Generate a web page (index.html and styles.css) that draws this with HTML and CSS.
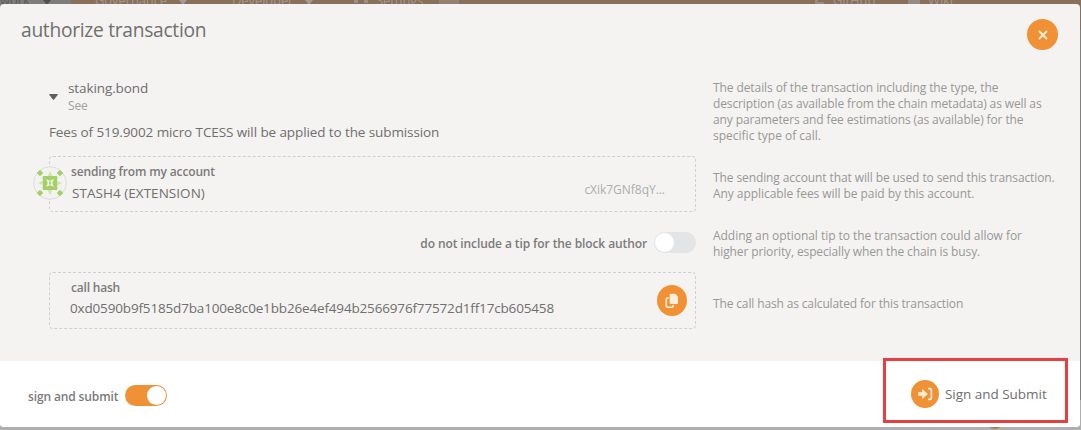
FILE: index.html
```html
<!DOCTYPE html>
<html lang="en">
<head>
<meta charset="utf-8">
<title>authorize transaction</title>
<link rel="stylesheet" href="styles.css">
</head>
<body>
<div class="backdrop">
  <nav class="menu">
    <span class="tab tab-current">work</span>
    <span class="tab tab-gov">Governance</span>
    <span class="tab tab-dev">Developer</span>
    <span class="tab tab-set">Settings</span>
    <span class="tab tab-git">GitHub</span>
    <span class="tab tab-wiki">Wiki</span>
    <i class="caret caret-a"></i><i class="caret caret-b"></i><i class="caret caret-c"></i>
    <i class="gear"></i><i class="badge"></i><i class="branch"></i><i class="book"></i>
  </nav>
  <i class="page-dot"></i>
</div>
<main class="modal">
  <header class="header">
    <h1 class="title">authorize transaction</h1>
    <button class="round close" aria-label="Close"><svg width="10" height="10" viewBox="0 0 10 10"><path d="M1 1l8 8M9 1l-8 8" fill="none" stroke="#fdeeda" stroke-width="1.8"/></svg></button>
  </header>
  <section class="content">
    <div class="row row-details">
      <div class="details">
        <div class="call">
          <svg class="arrow" width="9" height="6" viewBox="0 0 9 6"><path d="M.7 0h7.600q.9.4.3 1.100L5.100 5.400q-.6.6-1.200 0L.4 1.100Q-.2.4.7 0z" fill="#5f5f5e"/></svg>
          <div class="call-text"><div class="method">staking.bond</div><div class="see">See</div></div>
        </div>
        <p class="fees">Fees of 519.9002 micro TCESS will be applied to the submission</p>
      </div>
      <p class="help"><span class="l1">The details of the transaction including the type, the</span><br><span class="l2">description (as available from the chain metadata) as well as</span><br><span class="l3">any parameters and fee estimations (as available) for the</span><br><span class="l4">specific type of call.</span></p>
    </div>
    <div class="row row-account">
      <div class="box account">
        <svg class="identicon" width="34" height="34" viewBox="0 0 34 34"><circle cx="17" cy="17" r="16.3" fill="#f2f2f1" stroke="#dcdcdb"/><path d="M17 5l3.500 7H14zM29 17l-7 3.500V14zM17 29l-3.500-7H20zM5 17l7-3.500V20zM8.500 11.500l6-1-4 5zM25.500 11.500l-6-1 4 5zM8.500 22.500l6 1-4-5zM25.500 22.500l-6 1 4-5z" fill="#cfe5b0"/><path d="M10 10h14v14H10z" fill="#a5cf67"/><path d="M13 13l3 1.500h2L21 13l-1.500 3v2L21 21l-3-1.500h-2L13 21l1.500-3v-2z" fill="#f4f8ed"/><path d="M17 14.500l1.200 2.500-1.200 2.500-1.200-2.500z" fill="#a5cf67"/><path d="M7 4.200l2.800 2.800L7 9.800 4.200 7zM27 4.200l2.800 2.800L27 9.800 24.200 7zM7 24.200l2.800 2.800L7 29.800 4.200 27zM27 24.200l2.800 2.800-2.800 2.800-2.800-2.800z" fill="#a5cf67" stroke="#a5cf67" stroke-width=".8" stroke-linejoin="round"/></svg>
        <div class="field"><div class="label label-account">sending from my account</div><div class="value name">STASH4 (EXTENSION)</div></div>
        <span class="address">cXik7GNf8qY...</span>
      </div>
      <p class="help"><span class="l5">The sending account that will be used to send this transaction.</span><br><span class="l6">Any applicable fees will be paid by this account.</span></p>
    </div>
    <div class="row row-tip">
      <div class="tip"><span class="label label-tip">do not include a tip for the block author</span><span class="toggle"></span></div>
      <p class="help"><span class="l7">Adding an optional tip to the transaction could allow for</span><br><span class="l8">higher priority, especially when the chain is busy.</span></p>
    </div>
    <div class="row row-hash">
      <div class="box hash">
        <div class="field"><div class="label label-hash">call hash</div><div class="value digest">0xd0590b9f5185d7ba100e8c0e1bb26e4ef494b2566976f77572d1ff17cb605458</div></div>
        <button class="round copy" aria-label="Copy"><svg width="14" height="16" viewBox="0 0 14 16"><path d="M3.800 5H2.200q-.9 0-.9.9v7.400q0 .9.9.9h5q.9 0 .9-.9v-1.200" fill="none" stroke="#fdeedb" stroke-width="1.600"/><path d="M6 .8h4.200L13 3.600v6.200q0 1.300-1.300 1.300H6q-1.300 0-1.300-1.300V2.100Q4.700.8 6 .8z" fill="#fdeedb"/></svg></button>
      </div>
      <p class="help"><span class="l9">The call hash as calculated for this transaction</span></p>
    </div>
  </section>
  <footer class="footer">
    <div class="sign"><span class="label label-sign">sign and submit</span><span class="toggle toggle-on"></span></div>
    <div class="submit-frame"><button class="submit"><span class="round submit-icon"><svg width="15" height="14" viewBox="0 0 15 14"><path d="M.5 5.500h4V2.600L9.500 7l-5 4.400V8.500h-4z" fill="#fdeedb" stroke="#fdeedb" stroke-width=".6" stroke-linejoin="round"/><path d="M10 1.700h2.200q1.200 0 1.200 1.200v8.200q0 1.200-1.200 1.200H10" fill="none" stroke="#fdeedb" stroke-width="1.700"/></svg></span><span class="submit-text">Sign and Submit</span></button></div>
  </footer>
</main>
</body>
</html>
```
FILE: styles.css
```css
* { box-sizing: border-box; }
body { margin: 0; width: 1081px; height: 430px; overflow: hidden; position: relative; font: 13.5px/20px "Open Sans", "Noto Sans", sans-serif; letter-spacing: -.1px; color: #6f6f6e; background: #afafaf; }
h1, p { margin: 0; font-weight: 400; }
button { border: 0; padding: 0; background: none; font: inherit; letter-spacing: inherit; color: inherit; }
svg { display: block; flex: none; }
.backdrop { position: absolute; inset: 0; background: linear-gradient(#808080 0 400px, #afafaf 400px); }
.menu { position: absolute; top: 0; left: 0; right: 0; height: 30px; background: #88705a; overflow: hidden; }
.menu i, .tab { position: absolute; }
.tab { top: -8px; line-height: 16px; font-size: 13px; color: #a2968c; }
.tab-current { left: 0; width: 71px; height: 38px; background: #7d7d7d; color: #5b5b5b; }
.tab-gov { left: 95px; }
.tab-dev { left: 232px; }
.tab-set { left: 376px; }
.tab-git { left: 833px; }
.tab-wiki { left: 928px; }
.caret { top: 0; border: 4px solid transparent; border-top: 5px solid #a69a90; border-bottom: 0; }
.caret-a { left: 43px; border-top-color: #505050; }
.caret-b { left: 179px; }
.caret-c { left: 305px; }
.gear { left: 354px; top: 0; width: 14px; height: 3px; border: solid #9b8f84; border-width: 0 4px; }
.badge { left: 439px; top: 0; width: 20px; height: 4px; background: #94816f; }
.branch { left: 815px; top: 0; width: 9px; height: 4px; border: 2px solid #948b82; border-width: 0 0 2px 3px; }
.book { left: 908px; top: 0; width: 12px; height: 4px; background: #948b82; }
.page-dot { position: absolute; left: 985px; top: 409px; width: 20px; height: 20px; border-radius: 50%; background: #b07a48; }
.modal { position: relative; width: 1080px; height: 423px; margin-top: 4px; border-radius: 4px; overflow: hidden; background: #f4f3f1; display: flex; flex-direction: column; }
body::before { content: ""; display: table; }
.header { height: 62px; display: flex; justify-content: space-between; align-items: flex-start; padding: 14px 22px 0 21px; }
.title { font-size: 19.2px; line-height: 24px; letter-spacing: -.28px; }
.round { display: flex; align-items: center; justify-content: center; flex: none; width: 30px; height: 30px; border-radius: 50%; background: #f19135; }
.close { width: 31px; height: 31px; margin-top: 1px; }
.content { height: 295px; padding: 0 25px 0 49px; }
.row { display: grid; grid-template-columns: 647px 1fr; column-gap: 17px; }
.row-details { height: 90px; }
.call { display: flex; align-items: center; gap: 10px; padding-top: 13px; }
.call-text { height: 36px; }
.method { line-height: 19px; }
.see { font-size: 12px; line-height: 16px; color: #a1a1a0; }
.fees { margin-top: 7px; }
.help { font-size: 12px; line-height: 16px; color: #989896; white-space: nowrap; padding-top: 14px; }
.l1 { letter-spacing: -.09px; }
.l2, .l3, .l8 { letter-spacing: -.12px; }
.l4 { letter-spacing: 0; }
.l5 { letter-spacing: -.1px; }
.l6 { letter-spacing: -.06px; }
.l7 { letter-spacing: -.04px; }
.l9 { letter-spacing: -.14px; }
.box { position: relative; display: flex; justify-content: space-between; border: 1px dashed #d1d0ce; border-radius: 4px; }
.row-account { height: 66px; }
.account { height: 56px; }
.identicon { position: absolute; left: -17px; top: 9px; }
.field { padding: 7px 0 0 20px; }
.label { font-size: 12px; line-height: 16px; font-weight: 600; color: #7b7b79; white-space: nowrap; }
.label-account { padding-left: 1px; letter-spacing: -.14px; }
.label-hash { letter-spacing: -.2px; padding-left: 1px; }
.value { line-height: 20px; margin-top: 3px; white-space: nowrap; }
.name { padding-left: 2px; letter-spacing: .04px; }
.digest { letter-spacing: -.16px; margin-top: 2px; }
.address { font-size: 12px; line-height: 16px; letter-spacing: -.03px; color: #adadab; padding: 25px 30px 0 0; }
.row-tip { height: 50px; }
.tip { height: 41px; display: flex; justify-content: flex-end; align-items: center; gap: 7px; }
.label-tip { padding-top: 3px; }
.toggle { display: block; flex: none; width: 42px; height: 21px; border-radius: 11px; background: #e2e4e6; padding: 1px; }
.toggle::before { content: ""; display: block; width: 19px; height: 19px; border-radius: 50%; background: #fff; }
.toggle-on { background: #f19135; }
.toggle-on::before { margin-left: auto; }
.row-tip .help { padding-top: 6px; }
.row-hash .help { padding-top: 24px; }
.hash { height: 57px; align-items: flex-start; padding-right: 8px; }
.copy { height: 31px; margin-top: 12px; }
.footer { height: 66px; background: #fff; display: flex; justify-content: space-between; padding: 0 12px 0 28px; }
.sign { display: flex; align-items: center; gap: 7px; height: 69px; }
.label-sign { padding-top: 3px; letter-spacing: -.13px; }
.submit-frame { width: 185px; height: 65px; margin-top: -3px; border: 3px solid #e73e3f; display: flex; padding: 19px 0 0 25px; }
.submit { display: flex; align-items: center; gap: 6px; height: 28px; }
.submit-icon { width: 28px; height: 28px; }
.submit-text { white-space: nowrap; letter-spacing: -.03px; }
```
